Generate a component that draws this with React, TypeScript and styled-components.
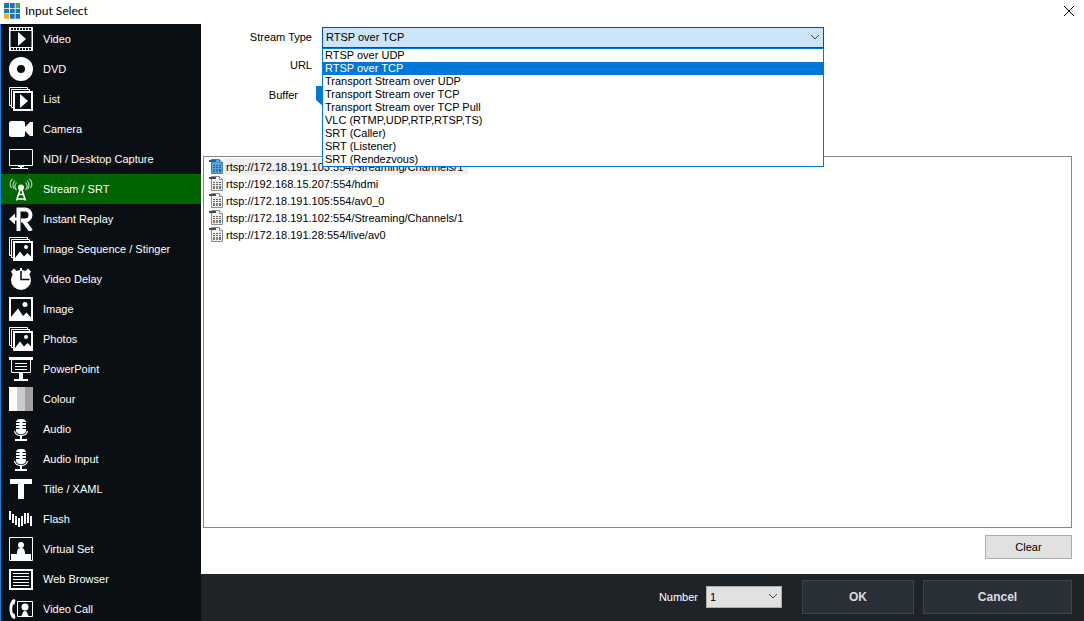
import React, { useState } from 'react';
import styled, { createGlobalStyle, css } from 'styled-components';

const GlobalStyle = createGlobalStyle`
  *, *::before, *::after { box-sizing: border-box; }
  html, body { margin: 0; padding: 0; overflow: hidden; }
  body {
    background: #ffffff;
    color: #000000;
    font-family: "Liberation Sans", Arial, sans-serif;
    font-size: 11px;
    line-height: 13px;
  }
  button, input, select { font: inherit; margin: 0; }
  ul { list-style: none; margin: 0; padding: 0; }
`;

const Window = styled.div`
  height: 100vh;
  display: flex;
  flex-direction: column;
  overflow: hidden;
`;

const TitleBar = styled.header`
  flex: none;
  height: 24px;
  display: flex;
  align-items: flex-start;
  gap: 5px;
  padding: 3px 9px 0 4px;
`;

const Title = styled.h1`
  flex: 1;
  margin: 0;
  font-family: Lato, "Open Sans", sans-serif;
  font-size: 12px;
  line-height: 16px;
  font-weight: 400;
`;

const CloseButton = styled.button`
  width: 12px;
  height: 16px;
  padding: 0;
  border: 0;
  background: none;
  display: flex;
  align-items: center;
  justify-content: center;
`;

const Body = styled.div`
  flex: 1;
  min-height: 0;
  display: flex;
`;

const Sidebar = styled.nav`
  flex: none;
  width: 201px;
  border-left: 1px solid #1883d7;
  background: #0a0f13;
  overflow: hidden;
`;

const SourceButton = styled.button<{ $active: boolean }>`
  width: 100%;
  height: 30px;
  display: flex;
  align-items: center;
  gap: 10px;
  padding: 0 8px;
  border: 0;
  background: ${(p) => (p.$active ? '#006400' : 'transparent')};
  color: #ffffff;
  text-align: left;
  white-space: nowrap;

  svg { flex: none; display: block; }
`;

const Main = styled.main`
  flex: 1;
  min-width: 0;
  display: flex;
  flex-direction: column;
`;

const Content = styled.section`
  flex: 1;
  min-height: 0;
  display: flex;
  flex-direction: column;
  padding: 3px 12px 15px 2px;
`;

const Form = styled.div`
  flex: none;
  height: 129px;
  display: grid;
  grid-template-columns: 109px minmax(0, 502px);
  grid-template-rows: 21px 34px 27px;
  column-gap: 10px;
  align-items: center;
`;

const FieldLabel = styled.label<{ $inset?: boolean }>`
  text-align: right;
  padding-right: ${(p) => (p.$inset ? 14 : 0)}px;
`;

const SelectFrame = styled.div`
  position: relative;
`;

const selectBase = css`
  appearance: none;
  width: 100%;
  display: block;
  border-radius: 0;
  outline: none;
  color: #000000;
`;

const StreamSelect = styled.select`
  ${selectBase}
  height: 21px;
  padding: 0 24px 0 3px;
  border: 1px solid #005499;
  background: #cce4f7;
`;

const NumberSelect = styled.select`
  ${selectBase}
  height: 22px;
  padding: 0 20px 0 3px;
  border: 1px solid #adadad;
  background: #e1e1e1;
`;

const Chevron = styled.svg`
  position: absolute;
  right: 4px;
  top: 7px;
  pointer-events: none;
`;

const Menu = styled.ul`
  position: absolute;
  z-index: 2;
  top: 100%;
  left: 0;
  right: 0;
  border: 1px solid #0078d7;
  background: #ffffff;
`;

const MenuItem = styled.li<{ $selected: boolean }>`
  height: 13px;
  padding-left: 2px;
  background: ${(p) => (p.$selected ? '#0078d7' : '#ffffff')};
  color: ${(p) => (p.$selected ? '#ffffff' : '#000000')};
`;

const UrlInput = styled.input`
  width: 100%;
  height: 20px;
  border: 1px solid #7a7a7a;
  padding: 0 3px;
`;

const BufferRange = styled.input`
  appearance: none;
  width: 180px;
  height: 20px;
  margin-left: -6px;
  background: transparent;

  &::-webkit-slider-thumb {
    appearance: none;
    width: 11px;
    height: 19px;
    background: #0078d7;
    clip-path: polygon(0 0, 100% 0, 100% 74%, 50% 100%, 0 74%);
  }
`;

const History = styled.ul`
  && { padding: 1px 5px; }
  flex: 1;
  min-height: 0;
  border: 1px solid #828790;
  background: #ffffff;
`;

const HistoryItem = styled.li`
  height: 17px;
  display: flex;
  align-items: center;

  svg { flex: none; display: block; }
`;

const HistoryText = styled.span<{ $selected: boolean }>`
  height: 17px;
  padding: 3px 5px 1px 1px;
  background: ${(p) => (p.$selected ? '#f0f0f0' : 'transparent')};
`;

const ListActions = styled.div`
  flex: none;
  display: flex;
  justify-content: flex-end;
  padding-top: 7px;
`;

const ClearButton = styled.button`
  width: 87px;
  height: 24px;
  padding: 0;
  border: 1px solid #adadad;
  background: #e1e1e1;
  color: #000000;
`;

const Footer = styled.footer`
  flex: none;
  height: 47px;
  display: flex;
  align-items: center;
  justify-content: flex-end;
  padding: 0 12px 1px 0;
  background: #1e2327;
  color: #ffffff;
`;

const NumberField = styled.div`
  display: flex;
  align-items: center;
  gap: 8px;
  margin-right: 20px;
`;

const NumberFrame = styled(SelectFrame)`
  width: 76px;
`;

const DialogButton = styled.button<{ $width: number }>`
  width: ${(p) => p.$width}px;
  height: 34px;
  padding: 0;
  border: 1px solid #3c4453;
  background: #2a3038;
  color: #dcdcdc;
  font-size: 12px;
  font-weight: 700;

  & + & { margin-left: 9px; }
`;

const Icon = ({ children }: { children: React.ReactNode }) => (
  <svg width="24" height="24" viewBox="0 0 24 24" fill="#fff" aria-hidden="true">
    {children}
  </svg>
);

const StackEdges = () => (
  <path d="M2.5 18.5H.5V.5h18v2M4.5 20.5h-2v-18h18v2" fill="none" stroke="#fff" />
);

const VideoIcon = () => (
  <Icon>
    <path
      fillRule="evenodd"
      d="M0 0h24v24H0zM1.500 4v16h21V4zM2 1v2h2V1zm3 0v2h2V1zm3 0v2h2V1zm3 0v2h2V1zm3 0v2h2V1zm3 0v2h2V1zm3 0v2h2V1zM2 21v2h2v-2zm3 0v2h2v-2zm3 0v2h2v-2zm3 0v2h2v-2zm3 0v2h2v-2zm3 0v2h2v-2zm3 0v2h2v-2z"
    />
    <path d="M9 5l8 7-8 7z" />
  </Icon>
);

const DiscIcon = () => (
  <Icon>
    <path fillRule="evenodd" d="M12 0a12 12 0 1 0 0 24 12 12 0 0 0 0-24zm0 8a4 4 0 1 1 0 8 4 4 0 0 1 0-8z" />
  </Icon>
);

const ListIcon = () => (
  <Icon>
    <StackEdges />
    <path fillRule="evenodd" d="M4 4h20v20H4zM6 6v16h16V6z" />
    <path d="M11 7l8 7-8 7z" />
  </Icon>
);

const CameraIcon = () => (
  <Icon>
    <rect y="4" width="16" height="16" rx="2.500" />
    <path d="M16 10l5-5h3v14h-3l-5-5z" />
  </Icon>
);

const MonitorIcon = () => (
  <Icon>
    <path d="M.5 2.500h23v16H.5z" fill="none" stroke="#fff" />
    <path d="M9 19h6v1h-2v1h6v1H2v-1h9v-1H9z" />
  </Icon>
);

const TowerIcon = () => (
  <Icon>
    <circle cx="12" cy="10.500" r="3" />
    <g fill="none" stroke="#fff">
      <path d="M11 13L7.500 23.500M13 13l3.500 10.500M9.500 17.500h5M8 22h8" strokeWidth="1.600" />
      <path
        d="M7.500 13C5.500 11 5.500 8 7.500 5.500M5 11.800C3.500 9 3.500 6.500 5.800 3.500M2.500 11C.5 8 .5 5 3.500 1.800M16.500 13c2-2 2-5 0-7.500M19 11.800c1.500-2.800 1.500-5.300-.8-8.300M21.500 11c2-3 2-6-1-9.200"
        stroke="#b5d6b5"
        strokeWidth="1.200"
      />
    </g>
  </Icon>
);

const ReplayIcon = () => (
  <Icon>
    <path d="M9.500 24V2.500h6.500a5 5 0 0 1 0 11h-4M14.500 13.500L22 24" fill="none" stroke="#fff" strokeWidth="4" />
    <path d="M0 12l6-5.500v4h4v3H6v4z" />
  </Icon>
);

const Landscape = () => (
  <>
    <circle cx="16" cy="7.500" r="2.500" />
    <path d="M2 22v-2l7-8.500 5 7.500 3.500-3.500 4.500 5V22z" />
  </>
);

const ImageIcon = () => (
  <Icon>
    <path fillRule="evenodd" d="M0 0h24v24H0zM2 2v20h20V2z" />
    <Landscape />
  </Icon>
);

const PhotosIcon = () => (
  <Icon>
    <StackEdges />
    <path fillRule="evenodd" d="M4 4h20v20H4zM6 6v16h16V6z" />
    <circle cx="17" cy="10" r="2" />
    <path d="M6 23v-2l5-6.500 4 5 1.500-1.500 2-2 4 4V23z" />
  </Icon>
);

const ClockIcon = () => (
  <Icon>
    <path d="M2 4.500l3-3 2 2 1.500 1L11 3V1h2v2l2.500 1.500 1.500-1 2-2 3 3-2 3.500H4z" />
    <circle cx="12" cy="13" r="10" />
    <path d="M12 4v8.500h8.500" fill="none" stroke="#0a0f13" strokeWidth="1.600" />
  </Icon>
);

const PresentationIcon = () => (
  <Icon>
    <path d="M0 0h24v3H0zM10 16h4v6h5v2H5v-2h5z" />
    <path d="M2.500 3v12.500h19V3" fill="none" stroke="#fff" />
    <path d="M6 6h12v1H6zM6 9h12v1H6zM6 12h12v1H6z" />
  </Icon>
);

const ColourIcon = () => (
  <Icon>
    <path d="M0 0h8v24H0z" />
    <path d="M8 0h8v24H8z" fill="#cbcbcb" />
    <path d="M16 0h8v24h-8z" fill="#a0a0a0" />
  </Icon>
);

const MicIcon = () => (
  <Icon>
    <rect x="7" y="2" width="10" height="15" rx="4" />
    <path d="M7 5.500h3.500M7 8.500h3.500M7 11.500h3.500M13.500 5.500H17M13.500 8.500H17M13.500 11.500H17" stroke="#0a0f13" />
    <path d="M5.500 14c.5 3 3 4.500 6.500 4.500s6-1.500 6.500-4.500" fill="none" stroke="#fff" strokeWidth="1.300" />
    <path d="M11 18h2v4h5v2H6v-2h5z" />
  </Icon>
);

const TitleIcon = () => (
  <Icon>
    <path d="M1 2h22v5h-8v15H9V7H1z" />
  </Icon>
);

const FlashIcon = () => (
  <Icon>
    <path d="M0 4h2v9H0zM3 7h2v9H3zM6 9h2v9H6zM9 11h2v9H9zM12 9h2v10h-2zM15 6h2v11h-2zM18 6h2v10h-2zM21 9h2v10h-2z" />
  </Icon>
);

const VirtualSetIcon = () => (
  <Icon>
    <path d="M.5.5h23v23H.5z" fill="none" stroke="#fff" />
    <circle cx="12" cy="8" r="3" />
    <path d="M8 17c0-4 1-6 4-6s4 2 4 6h6v6H2v-6z" />
  </Icon>
);

const BrowserIcon = () => (
  <Icon>
    <path fillRule="evenodd" d="M0 2h24v21H0zM2 4v17h20V4z" />
    <path d="M4 6h16v1H4zM4 9h16v1H4zM4 12h16v1H4zM4 15h16v1H4zM4 18h16v1H4z" />
  </Icon>
);

const CallIcon = () => (
  <Icon>
    <path d="M5 2C-1 4-1 20 5 22l1.500-1-1-4.500H4c-1-2-1-7 0-9h1.500l1-4.500z" />
    <path d="M8.500 4.500h15v15h-15z" fill="none" stroke="#fff" />
    <circle cx="16" cy="10" r="3.500" />
    <path d="M12 19c2-1 1-5 4-5s2 4 4 5z" />
  </Icon>
);

const AppLogo = () => (
  <svg width="16" height="16" viewBox="0 0 16 16" fill="#1e73be" aria-hidden="true">
    <path d="M0 0h5v5H0zM6 0h4.700v5H6zM0 5.700h5v4.600H0zM6 5.700h4.700v4.600H6zM11.500 5.700H16v4.600h-4.500zM6 11h4.700v4.700H6zM11.500 11H16v4.700h-4.500z" />
    <path d="M11.500 0H16v5h-4.500z" fill="#36b34a" />
    <path d="M0 11h5v4.700H0z" fill="#fba919" />
  </svg>
);

const FileIcon = ({ selected }: { selected: boolean }) => (
  <svg width="16" height="16" viewBox="0 1 16 16" aria-hidden="true">
    <path d="M2.500 1.500h8l3 3v11h-11z" fill={selected ? '#5ba3dc' : '#f1f1f1'} stroke={selected ? '#3b7fbb' : '#8c8c8c'} />
    <path d="M10.500 1.500v3h3" fill={selected ? '#a5cdee' : '#ffffff'} stroke={selected ? '#3b7fbb' : '#8c8c8c'} />
    <path d="M0 2h7v2H0z" fill={selected ? '#245f94' : '#4a4a4a'} />
    <path d="M4 7.500h8M4 9.500h8" stroke={selected ? '#245f94' : '#606060'} strokeDasharray="2 1" />
    <path d="M4 11h2v3H4z" fill={selected ? '#3476a8' : '#d4574e'} />
    <path d="M7 11h2v3H7z" fill={selected ? '#3476a8' : '#4aa564'} />
    <path d="M10 11h2v3h-2z" fill={selected ? '#2f5fb0' : '#4d6fd0'} />
  </svg>
);

const ChevronDown = () => (
  <Chevron width="10" height="7" viewBox="0 0 10 7" fill="none" stroke="#444" aria-hidden="true">
    <path d="M1 1l4 4 4-4" />
  </Chevron>
);

const sources: { label: string; icon: React.ComponentType }[] = [
  { label: 'Video', icon: VideoIcon },
  { label: 'DVD', icon: DiscIcon },
  { label: 'List', icon: ListIcon },
  { label: 'Camera', icon: CameraIcon },
  { label: 'NDI / Desktop Capture', icon: MonitorIcon },
  { label: 'Stream / SRT', icon: TowerIcon },
  { label: 'Instant Replay', icon: ReplayIcon },
  { label: 'Image Sequence / Stinger', icon: PhotosIcon },
  { label: 'Video Delay', icon: ClockIcon },
  { label: 'Image', icon: ImageIcon },
  { label: 'Photos', icon: PhotosIcon },
  { label: 'PowerPoint', icon: PresentationIcon },
  { label: 'Colour', icon: ColourIcon },
  { label: 'Audio', icon: MicIcon },
  { label: 'Audio Input', icon: MicIcon },
  { label: 'Title / XAML', icon: TitleIcon },
  { label: 'Flash', icon: FlashIcon },
  { label: 'Virtual Set', icon: VirtualSetIcon },
  { label: 'Web Browser', icon: BrowserIcon },
  { label: 'Video Call', icon: CallIcon },
];

const streamTypes = [
  'RTSP over UDP',
  'RTSP over TCP',
  'Transport Stream over UDP',
  'Transport Stream over TCP',
  'Transport Stream over TCP Pull',
  'VLC (RTMP,UDP,RTP,RTSP,TS)',
  'SRT (Caller)',
  'SRT (Listener)',
  'SRT (Rendezvous)',
];

const recentUrls = [
  'rtsp://172.18.191.103:554/Streaming/Channels/1',
  'rtsp://192.168.15.207:554/hdmi',
  'rtsp://172.18.191.105:554/av0_0',
  'rtsp://172.18.191.102:554/Streaming/Channels/1',
  'rtsp://172.18.191.28:554/live/av0',
];

export default function App() {
  const [source, setSource] = useState('Stream / SRT');
  const [streamType, setStreamType] = useState('RTSP over TCP');
  const [selectedUrl, setSelectedUrl] = useState(0);

  return (
    <>
      <GlobalStyle />
      <Window>
        <TitleBar>
          <AppLogo />
          <Title>Input Select</Title>
          <CloseButton type="button" aria-label="Close">
            <svg width="12" height="12" viewBox="0 0 12 12" stroke="#000" aria-hidden="true">
              <path d="M1 1l10 10M11 1L1 11" />
            </svg>
          </CloseButton>
        </TitleBar>
        <Body>
          <Sidebar>
            {sources.map(({ label, icon: SourceIcon }) => (
              <SourceButton key={label} type="button" $active={label === source} onClick={() => setSource(label)}>
                <SourceIcon />
                {label}
              </SourceButton>
            ))}
          </Sidebar>
          <Main>
            <Content>
              <Form>
                <FieldLabel htmlFor="stream-type">Stream Type</FieldLabel>
                <SelectFrame>
                  <StreamSelect id="stream-type" value={streamType} onChange={(e) => setStreamType(e.target.value)}>
                    {streamTypes.map((type) => (
                      <option key={type}>{type}</option>
                    ))}
                  </StreamSelect>
                  <ChevronDown />
                  <Menu role="listbox" aria-label="Stream Type">
                    {streamTypes.map((type) => (
                      <MenuItem
                        key={type}
                        role="option"
                        aria-selected={type === streamType}
                        $selected={type === streamType}
                        onClick={() => setStreamType(type)}
                      >
                        {type}
                      </MenuItem>
                    ))}
                  </Menu>
                </SelectFrame>
                <FieldLabel htmlFor="url">URL</FieldLabel>
                <UrlInput id="url" type="text" />
                <FieldLabel htmlFor="buffer" $inset>Buffer</FieldLabel>
                <BufferRange id="buffer" type="range" min={0} max={100} defaultValue={0} />
              </Form>
              <History>
                {recentUrls.map((url, i) => (
                  <HistoryItem key={url} onClick={() => setSelectedUrl(i)}>
                    <FileIcon selected={i === selectedUrl} />
                    <HistoryText $selected={i === selectedUrl}>{url}</HistoryText>
                  </HistoryItem>
                ))}
              </History>
              <ListActions>
                <ClearButton type="button">Clear</ClearButton>
              </ListActions>
            </Content>
            <Footer>
              <NumberField>
                <label htmlFor="number">Number</label>
                <NumberFrame>
                  <NumberSelect id="number" defaultValue="1">
                    {['1', '2', '3', '4'].map((n) => (
                      <option key={n}>{n}</option>
                    ))}
                  </NumberSelect>
                  <ChevronDown />
                </NumberFrame>
              </NumberField>
              <DialogButton type="button" $width={112}>OK</DialogButton>
              <DialogButton type="button" $width={149}>Cancel</DialogButton>
            </Footer>
          </Main>
        </Body>
      </Window>
    </>
  );
}
